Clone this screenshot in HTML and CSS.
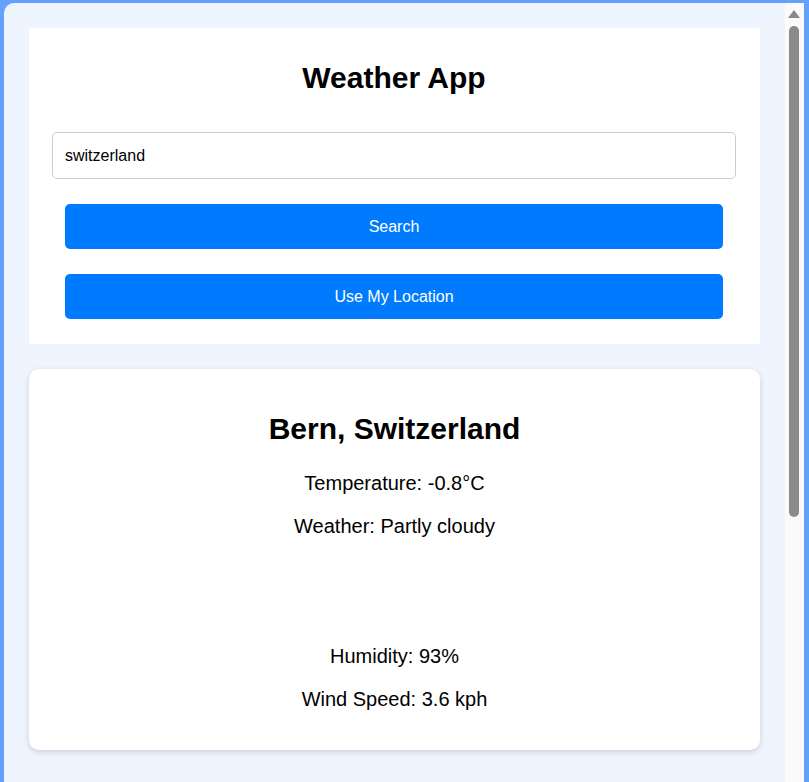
FILE: index.html
```html
<!DOCTYPE html>
<html lang="en">
<head>
<meta charset="utf-8">
<title>Weather App</title>
<link rel="stylesheet" href="styles.css">
</head>
<body>
<div class="frame">
  <div class="app">
    <section class="search-card">
      <h1 class="title">Weather App</h1>
      <input class="city-input" type="text" value="switzerland">
      <button class="btn">Search</button>
      <button class="btn">Use My Location</button>
    </section>
    <section class="weather-card">
      <h2 class="place">Bern, Switzerland</h2>
      <p class="line">Temperature: -0.8°C</p>
      <p class="line">Weather: Partly cloudy</p>
      <div class="weather-icon"></div>
      <p class="line">Humidity: 93%</p>
      <p class="line">Wind Speed: 3.6 kph</p>
    </section>
  </div>
  <div class="scrollbar" aria-hidden="true">
    <div class="scroll-arrow"></div>
    <div class="scroll-thumb"></div>
  </div>
</div>
</body>
</html>
```
FILE: styles.css
```css
html, body {
  margin: 0;
  padding: 0;
  height: 100%;
  overflow: hidden;
}
body {
  background: #64a1fc;
  font-family: "Liberation Sans", Arial, sans-serif;
  color: #000;
  padding: 3px 5px 0 4px;
  box-sizing: border-box;
}
.frame {
  height: 100%;
  background: #eef5ff;
  border-top-left-radius: 10px;
  display: flex;
  overflow: hidden;
}
.app {
  flex: 1;
  min-width: 0;
  padding: 25px;
  display: flex;
  flex-direction: column;
  gap: 25px;
  overflow: hidden;
}
.scrollbar {
  width: 19px;
  flex: none;
  background: #fafafa;
  display: flex;
  flex-direction: column;
  align-items: flex-start;
  padding-left: 3px;
  box-sizing: border-box;
}
.scroll-arrow {
  width: 0;
  height: 0;
  margin-top: 7px;
  border-style: solid;
  border-width: 0 6px 8px 6px;
  border-color: transparent transparent #8a8a8a transparent;
}
.scroll-thumb {
  width: 10px;
  height: 491px;
  margin: 8px 0 0 1px;
  border-radius: 6px;
  background: #8a8a8a;
}
.search-card {
  background: #fff;
  padding: 33px 24px 25px 23px;
  display: flex;
  flex-direction: column;
}
.title {
  margin: 0 0 37px;
  font-size: 30px;
  font-weight: bold;
  text-align: center;
}
.city-input {
  height: 47px;
  box-sizing: border-box;
  padding: 0 12px;
  border: 1px solid #ccc;
  border-radius: 5px;
  font-family: "Liberation Sans", Arial, sans-serif;
  font-size: 16px;
  color: #000;
  background: #fff;
  margin: 0 0 25px;
}
.btn {
  height: 45px;
  margin: 0 13px;
  border: none;
  border-radius: 5px;
  background: #007bff;
  color: #fff;
  font-family: "Liberation Sans", Arial, sans-serif;
  font-size: 16px;
}
.btn + .btn {
  margin-top: 25px;
}
.weather-card {
  background: #fff;
  border-radius: 10px;
  box-shadow: 0 2px 6px rgba(0, 0, 0, 0.15);
  padding: 43px 20px 18.5px;
  text-align: center;
}
.place {
  margin: 0 0 26px;
  font-size: 30px;
  font-weight: bold;
}
.line {
  margin: 20px 0;
  font-size: 20px;
}
.weather-icon {
  height: 67px;
}
```
